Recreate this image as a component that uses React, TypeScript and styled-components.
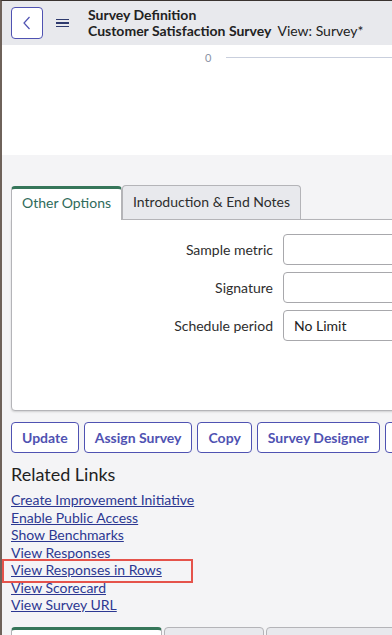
import React from 'react';
import styled, { createGlobalStyle } from 'styled-components';

const GlobalStyle = createGlobalStyle`
  html, body {
    margin: 0;
    padding: 0;
    background: #f4f4f6;
  }
  body {
    font-family: 'Lato', 'Noto Sans', sans-serif;
    color: #2e2e2e;
  }
`;

const purple = '#4f52b2';

const Page = styled.div`
  width: 392px;
  height: 635px;
  overflow: hidden;
  box-sizing: border-box;
  border-left: 2px solid #6e625a;
  border-top: 1px solid #3a3330;
  background: #f4f4f6;
`;

const Header = styled.div`
  height: 44px;
  background: #e8e9ed;
  display: flex;
  align-items: center;
  padding-left: 9px;
`;

const BackButton = styled.button`
  width: 32px;
  height: 32px;
  box-sizing: border-box;
  border: 1px solid ${purple};
  border-radius: 4px;
  background: #fff;
  padding: 0;
  display: flex;
  align-items: center;
  justify-content: center;
`;

const Burger = styled.div`
  margin-left: 13px;
  width: 13px;
  display: flex;
  flex-direction: column;
  gap: 2px;
  & > span {
    display: block;
    height: 1.5px;
    background: #2e3a6e;
  }
`;

const TitleBlock = styled.div`
  margin-left: 19px;
  display: flex;
  flex-direction: column;
  font-size: 14px;
  line-height: 16px;
  font-weight: 700;
  color: #222;
  white-space: nowrap;
`;

const ViewName = styled.span`
  font-weight: 400;
  margin-left: 6px;
`;

const ChartArea = styled.div`
  height: 110px;
  background: #fff;
  display: flex;
  align-items: flex-start;
  padding-top: 7px;
  box-sizing: border-box;
`;

const AxisLabel = styled.span`
  margin-left: 203px;
  font-size: 11px;
  color: #8a93a6;
  line-height: 12px;
`;

const AxisLine = styled.div`
  flex: 1;
  margin-left: 15px;
  margin-top: 5px;
  height: 1px;
  background: #c9cfdd;
`;

const Body = styled.div`
  padding: 30px 0 0 9px;
`;

const TabBar = styled.div`
  display: flex;
  align-items: flex-end;
`;

const Tab = styled.div<{ $active?: boolean }>`
  height: 34px;
  box-sizing: border-box;
  padding: 0 10px ${p => (p.$active ? '4px' : '2px')};
  display: flex;
  align-items: center;
  font-size: 14px;
  white-space: nowrap;
  border: 1px solid #b4b4b8;
  border-bottom: none;
  border-radius: 4px 4px 0 0;
  background: ${p => (p.$active ? '#fff' : '#e8e9ed')};
  color: ${p => (p.$active ? '#2f6b5b' : '#2e2e2e')};
  border-top: ${p => (p.$active ? '3px solid #36765a' : '1px solid #b4b4b8')};
  margin-bottom: ${p => (p.$active ? '-1px' : '0')};
  position: relative;
  z-index: ${p => (p.$active ? 1 : 0)};
`;

const Panel = styled.div`
  width: 420px;
  height: 192px;
  box-sizing: border-box;
  background: #fff;
  border: 1px solid #b4b4b8;
  border-radius: 0 0 0 4px;
  box-shadow: 0 1px 2px rgba(0, 0, 0, 0.15);
  padding-top: 14px;
  display: flex;
  flex-direction: column;
  gap: 7px;
`;

const FormRow = styled.div`
  display: grid;
  grid-template-columns: 261px 1fr;
  column-gap: 10px;
  align-items: center;
`;

const Label = styled.label`
  text-align: right;
  font-size: 14px;
`;

const Field = styled.div`
  height: 31px;
  box-sizing: border-box;
  border: 1px solid #a8a8ac;
  border-radius: 4px;
  font-size: 14px;
  display: flex;
  align-items: center;
  padding-left: 10px;
  color: #222;
`;

const ButtonRow = styled.div`
  display: flex;
  gap: 5px;
  margin-top: 11px;
`;

const Button = styled.button<{ $w?: number }>`
  height: 31px;
  box-sizing: border-box;
  border: 1px solid ${purple};
  border-radius: 4px;
  background: #fff;
  color: ${purple};
  font-family: 'Lato', sans-serif;
  font-size: 14px;
  font-weight: 700;
  padding: 0 10px;
  white-space: nowrap;
  flex-shrink: 0;
  ${p => (p.$w ? `width: ${p.$w}px;` : '')}
`;

const RelatedTitle = styled.h2`
  margin: 10px 0 6px;
  font-size: 18px;
  font-weight: 400;
  line-height: 22px;
  color: #1f1f1f;
`;

const LinkList = styled.div`
  display: flex;
  flex-direction: column;
`;

const LinkItem = styled.a<{ $plain?: boolean; $marked?: boolean }>`
  font-size: 14px;
  line-height: 17.5px;
  color: #2c3892;
  text-decoration: ${p => (p.$plain ? 'none' : 'underline')};
  position: relative;
  align-self: flex-start;
  cursor: pointer;
  ${p =>
    p.$marked &&
    `
    &::after {
      content: "";
      position: absolute;
      left: -9px;
      top: -2px;
      width: 187px;
      height: 20px;
      border: 2px solid #e5534b;
    }
  `}
`;

const BottomTabs = styled.div`
  display: flex;
  gap: 2px;
  margin-top: 13px;
`;

const BottomTab = styled.div<{ $active?: boolean; $w: number }>`
  width: ${p => p.$w}px;
  height: 20px;
  flex-shrink: 0;
  box-sizing: border-box;
  border: 1px solid #b4b4b8;
  border-top: ${p => (p.$active ? '3px solid #36765a' : '1px solid #b4b4b8')};
  border-radius: 4px 4px 0 0;
  background: ${p => (p.$active ? '#fff' : '#e8e9ed')};
`;

const links = [
  { t: 'Create Improvement Initiative' },
  { t: 'Enable Public Access' },
  { t: 'Show Benchmarks' },
  { t: 'View Responses', plain: true },
  { t: 'View Responses in Rows', marked: true },
  { t: 'View Scorecard' },
  { t: 'View Survey URL' },
];

export default function App() {
  return (
    <>
      <GlobalStyle />
      <Page>
        <Header>
          <BackButton aria-label="Back">
            <svg width="10" height="14" viewBox="0 0 10 14">
              <path d="M7.5 1 L2 7 L7.5 13" fill="none" stroke={purple} strokeWidth="1.2" />
            </svg>
          </BackButton>
          <Burger>
            <span />
            <span />
            <span />
          </Burger>
          <TitleBlock>
            <span>Survey Definition</span>
            <span>
              Customer Satisfaction Survey
              <ViewName>View: Survey*</ViewName>
            </span>
          </TitleBlock>
        </Header>
        <ChartArea>
          <AxisLabel>0</AxisLabel>
          <AxisLine />
        </ChartArea>
        <Body>
          <TabBar>
            <Tab $active>Other Options</Tab>
            <Tab>Introduction &amp; End Notes</Tab>
          </TabBar>
          <Panel>
            <FormRow>
              <Label>Sample metric</Label>
              <Field />
            </FormRow>
            <FormRow>
              <Label>Signature</Label>
              <Field />
            </FormRow>
            <FormRow>
              <Label>Schedule period</Label>
              <Field>No Limit</Field>
            </FormRow>
          </Panel>
          <ButtonRow>
            <Button>Update</Button>
            <Button>Assign Survey</Button>
            <Button>Copy</Button>
            <Button>Survey Designer</Button>
            <Button $w={60} aria-label="More" />
          </ButtonRow>
          <RelatedTitle>Related Links</RelatedTitle>
          <LinkList>
            {links.map(l => (
              <LinkItem key={l.t} $plain={l.plain} $marked={l.marked}>
                {l.t}
              </LinkItem>
            ))}
          </LinkList>
          <BottomTabs>
            <BottomTab $active $w={151} />
            <BottomTab $w={100} />
            <BottomTab $w={130} />
          </BottomTabs>
        </Body>
      </Page>
    </>
  );
}
